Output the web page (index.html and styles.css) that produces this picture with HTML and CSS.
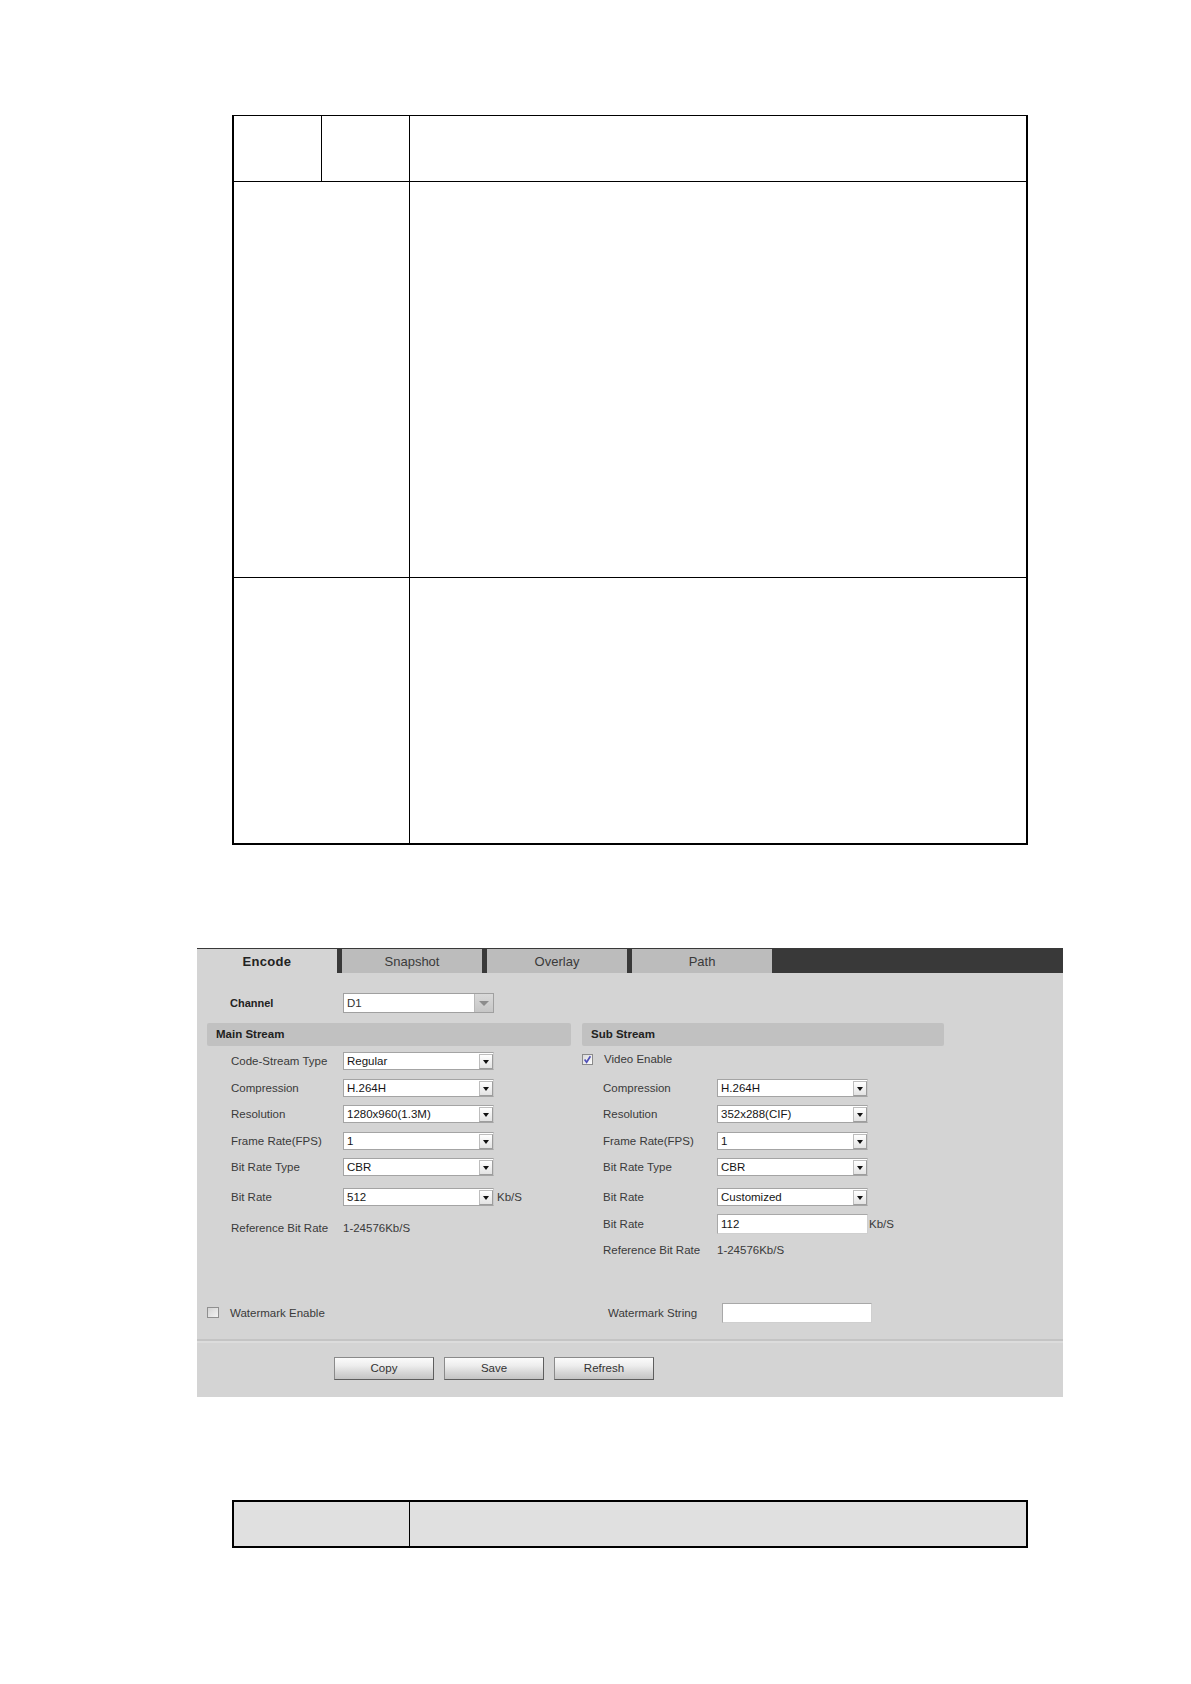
FILE: index.html
```html
<!DOCTYPE html>
<html>
<head>
<meta charset="utf-8">
<title>Encode</title>
<link rel="stylesheet" href="styles.css">
</head>
<body>
<div class="page">
  <div class="t1">
    <div class="t1-row t1-head">
      <div class="cell c-a"></div>
      <div class="cell c-b"></div>
      <div class="cell"></div>
    </div>
    <div class="t1-row t1-mid">
      <div class="cell c-k"></div>
      <div class="cell"></div>
    </div>
    <div class="t1-row t1-low">
      <div class="cell c-k"></div>
      <div class="cell"></div>
    </div>
  </div>

  <div class="panel">
    <div class="tabbar">
      <div class="tab active">Encode</div>
      <div class="tab">Snapshot</div>
      <div class="tab">Overlay</div>
      <div class="tab">Path</div>
    </div>

    <div class="pbody">
      <div class="chan">
        <div class="chan-l">Channel</div>
        <div class="sel sel-ch"><span class="val">D1</span><span class="btn-ch"><i class="tri tri-grey"></i></span></div>
      </div>

      <div class="streams">
        <div class="col col-main">
          <div class="hd">Main Stream</div>
          <div class="rows">
            <div class="row"><div class="lbl">Code-Stream Type</div><div class="sel"><span class="val">Regular</span><span class="btn"><i class="tri"></i></span></div></div>
            <div class="row"><div class="lbl">Compression</div><div class="sel"><span class="val">H.264H</span><span class="btn"><i class="tri"></i></span></div></div>
            <div class="row"><div class="lbl">Resolution</div><div class="sel"><span class="val">1280x960(1.3M)</span><span class="btn"><i class="tri"></i></span></div></div>
            <div class="row"><div class="lbl">Frame Rate(FPS)</div><div class="sel"><span class="val">1</span><span class="btn"><i class="tri"></i></span></div></div>
            <div class="row"><div class="lbl">Bit Rate Type</div><div class="sel"><span class="val">CBR</span><span class="btn"><i class="tri"></i></span></div></div>
            <div class="row row-tall"><div class="lbl">Bit Rate</div><div class="sel"><span class="val">512</span><span class="btn"><i class="tri"></i></span></div><span class="unit">Kb/S</span></div>
            <div class="row row-ref"><div class="lbl">Reference Bit Rate</div><div class="txt">1-24576Kb/S</div></div>
          </div>
        </div>

        <div class="col col-sub">
          <div class="hd">Sub Stream</div>
          <div class="rows">
            <div class="row row-cb">
              <span class="cb">
                <svg width="11" height="11" viewBox="0 0 11 11"><defs><linearGradient id="cbg" x1="0" y1="0" x2="1" y2="1"><stop offset="0" stop-color="#d8d8d8"/><stop offset="1" stop-color="#ffffff"/></linearGradient></defs><rect x="0.5" y="0.5" width="10" height="10" fill="url(#cbg)" stroke="#8a8a8a"/><path d="M2.6 5.6 L4.6 8.2 L8.4 2.2" fill="none" stroke="#5050b8" stroke-width="1.7"/></svg>
              </span>
              <div class="cb-l">Video Enable</div>
            </div>
            <div class="row"><div class="lbl">Compression</div><div class="sel"><span class="val">H.264H</span><span class="btn"><i class="tri"></i></span></div></div>
            <div class="row"><div class="lbl">Resolution</div><div class="sel"><span class="val">352x288(CIF)</span><span class="btn"><i class="tri"></i></span></div></div>
            <div class="row"><div class="lbl">Frame Rate(FPS)</div><div class="sel"><span class="val">1</span><span class="btn"><i class="tri"></i></span></div></div>
            <div class="row"><div class="lbl">Bit Rate Type</div><div class="sel"><span class="val">CBR</span><span class="btn"><i class="tri"></i></span></div></div>
            <div class="row row-tall"><div class="lbl">Bit Rate</div><div class="sel"><span class="val">Customized</span><span class="btn"><i class="tri"></i></span></div></div>
            <div class="row row-inp"><div class="lbl">Bit Rate</div><div class="inp"><span class="val">112</span></div><span class="unit unit-tight">Kb/S</span></div>
            <div class="row row-ref"><div class="lbl">Reference Bit Rate</div><div class="txt">1-24576Kb/S</div></div>
          </div>
        </div>
      </div>

      <div class="wm">
        <span class="cb cb-off">
          <svg width="12" height="11" viewBox="0 0 12 11"><defs><linearGradient id="cbo" x1="0" y1="0" x2="1" y2="1"><stop offset="0" stop-color="#d2d2d2"/><stop offset="1" stop-color="#f4f4f4"/></linearGradient></defs><rect x="0.5" y="0.5" width="11" height="10" fill="url(#cbo)" stroke="#8f8f8f"/></svg>
        </span>
        <div class="wm-l1">Watermark Enable</div>
        <div class="wm-l2">Watermark String</div>
        <div class="inp inp-wm"></div>
      </div>

      <div class="sep"></div>

      <div class="foot">
        <div class="button">Copy</div>
        <div class="button">Save</div>
        <div class="button">Refresh</div>
      </div>
    </div>
  </div>

  <div class="t2">
    <div class="cell c-k"></div>
    <div class="cell"></div>
  </div>
</div>
</body>
</html>
```

FILE: styles.css
```css
html, body {
  margin: 0;
  padding: 0;
  background: #ffffff;
}

body {
  font-family: "Liberation Sans", Arial, "DejaVu Sans", sans-serif;
  color: #333;
}

.page {
  width: 1191px;
  padding-top: 115px;
  padding-bottom: 120px;
}

/* ---------- top table ---------- */
.t1 {
  margin-left: 232px;
  width: 796px;
  box-sizing: border-box;
  border: 2px solid #000;
  border-top-width: 1px;
  border-bottom-width: 2px;
}

.t1-row {
  display: grid;
  box-sizing: border-box;
}

.t1-head {
  height: 66px;
  grid-template-columns: 88px 88px 1fr;
  border-bottom: 1px solid #000;
}

.t1-mid {
  height: 396px;
  grid-template-columns: 176px 1fr;
  border-bottom: 1px solid #000;
}

.t1-low {
  height: 265px;
  grid-template-columns: 176px 1fr;
}

.cell {
  box-sizing: border-box;
}

.c-a,
.c-b,
.c-k {
  border-right: 1px solid #000;
}

/* ---------- screenshot panel ---------- */
.panel {
  margin-top: 103px;
  margin-left: 197px;
  width: 866px;
  height: 449px;
  background: #d4d4d4;
  overflow: hidden;
}

.tabbar {
  height: 25px;
  box-sizing: border-box;
  padding-top: 1px;
  background: #393939;
  display: flex;
  gap: 5px;
}

.tab {
  width: 140px;
  height: 24px;
  line-height: 26px;
  text-align: center;
  font-size: 13px;
  color: #3a3a3a;
  background: #bcbcbc;
}

.tab.active {
  background: #d4d4d4;
  font-weight: bold;
  color: #222;
  letter-spacing: 0.3px;
}

.pbody {
  padding-top: 20px;
  font-size: 11.5px;
}

.chan {
  display: flex;
  align-items: center;
  height: 20px;
  padding-left: 33px;
}

.chan-l {
  width: 113px;
  font-weight: bold;
  font-size: 11px;
  color: #222;
}

.sel {
  width: 151px;
  height: 18px;
  box-sizing: border-box;
  background: #fff;
  border: 1px solid #a4a4a4;
  border-right-color: #c8c8c8;
  display: flex;
  align-items: stretch;
}

.val {
  flex: 1;
  padding-left: 3px;
  line-height: 16px;
  color: #151515;
  white-space: nowrap;
  overflow: hidden;
}

.sel-ch {
  height: 20px;
  border-color: #a0a0a0;
}

.sel-ch .val {
  line-height: 18px;
  color: #333;
}

.btn-ch {
  width: 18px;
  background: linear-gradient(#d9d9d9, #c6c6c6);
  border-left: 1px solid #b8b8b8;
  display: flex;
  align-items: center;
  justify-content: center;
}

.btn {
  width: 14px;
  margin: 1px 0 0 0;
  box-sizing: border-box;
  background: linear-gradient(#ffffff, #e3e3e3);
  border: 1px solid #9d9d9d;
  border-top-color: #bdbdbd;
  border-left-color: #bdbdbd;
  display: flex;
  align-items: center;
  justify-content: center;
}

.tri {
  display: block;
  width: 0;
  height: 0;
  border-left: 3.5px solid transparent;
  border-right: 3.5px solid transparent;
  border-top: 4px solid #111;
  margin-top: 1px;
}

.tri-grey {
  border-left-width: 5px;
  border-right-width: 5px;
  border-top: 5px solid #8c8c8c;
}

.streams {
  display: flex;
  gap: 11px;
  margin-top: 10px;
  padding-left: 10px;
  align-items: flex-start;
}

.col-main {
  width: 364px;
}

.col-sub {
  width: 362px;
}

.hd {
  height: 23px;
  line-height: 23px;
  background: #c1c1c1;
  padding-left: 9px;
  font-weight: bold;
  font-size: 11.5px;
  color: #222;
  border-radius: 2px;
}

.rows {
  padding-top: 2px;
}

.row {
  display: flex;
  align-items: center;
  height: 26.5px;
}

.row-tall {
  height: 32px;
}

.row-inp {
  height: 22px;
}

.row-ref {
  height: 30px;
}

.lbl {
  box-sizing: border-box;
  width: 136px;
  padding-left: 24px;
  color: #3a3a3a;
  white-space: nowrap;
}

.col-sub .lbl {
  width: 135px;
  padding-left: 21px;
}

.unit {
  margin-left: 3px;
  color: #3a3a3a;
}

.unit-tight {
  margin-left: 1px;
}

.txt {
  color: #3a3a3a;
}

.cb {
  display: flex;
  width: 12px;
  height: 11px;
}

.row-cb .cb {
  margin-top: -4px;
}

.cb-l {
  margin-left: 10px;
  margin-top: -4px;
  color: #3a3a3a;
}

.inp {
  width: 151px;
  height: 20px;
  box-sizing: border-box;
  background: #fff;
  border: 1px solid #a8a8a8;
  border-right-color: #cfcfcf;
  border-bottom-color: #cfcfcf;
  display: flex;
}

.inp .val {
  line-height: 18px;
}

.wm {
  display: flex;
  align-items: center;
  height: 20px;
  margin-top: 38px;
  padding-left: 10px;
}

.wm-l1 {
  margin-left: 11px;
  width: 378px;
  color: #3a3a3a;
}

.wm-l2 {
  width: 114px;
  color: #3a3a3a;
}

.inp-wm {
  width: 150px;
}

.sep {
  margin-top: 16px;
  height: 2px;
  background: #c4c4c4;
  border-bottom: 2px solid #dcdcdc;
}

.foot {
  display: flex;
  gap: 10px;
  padding-left: 137px;
  padding-top: 14px;
}

.button {
  width: 100px;
  height: 23px;
  box-sizing: border-box;
  border: 1px solid #5e5e5e;
  border-top-color: #8a8a8a;
  border-left-color: #8a8a8a;
  background: linear-gradient(#fbfbfb 0%, #eeeeee 35%, #d6d6d6 70%, #c4c4c4 100%);
  text-align: center;
  line-height: 21px;
  font-size: 11.5px;
  color: #333;
}

/* ---------- bottom table ---------- */
.t2 {
  margin-top: 103px;
  margin-left: 232px;
  width: 796px;
  height: 48px;
  box-sizing: border-box;
  border: 2px solid #000;
  background: #e0e0e0;
  display: grid;
  grid-template-columns: 176px 1fr;
}
```
